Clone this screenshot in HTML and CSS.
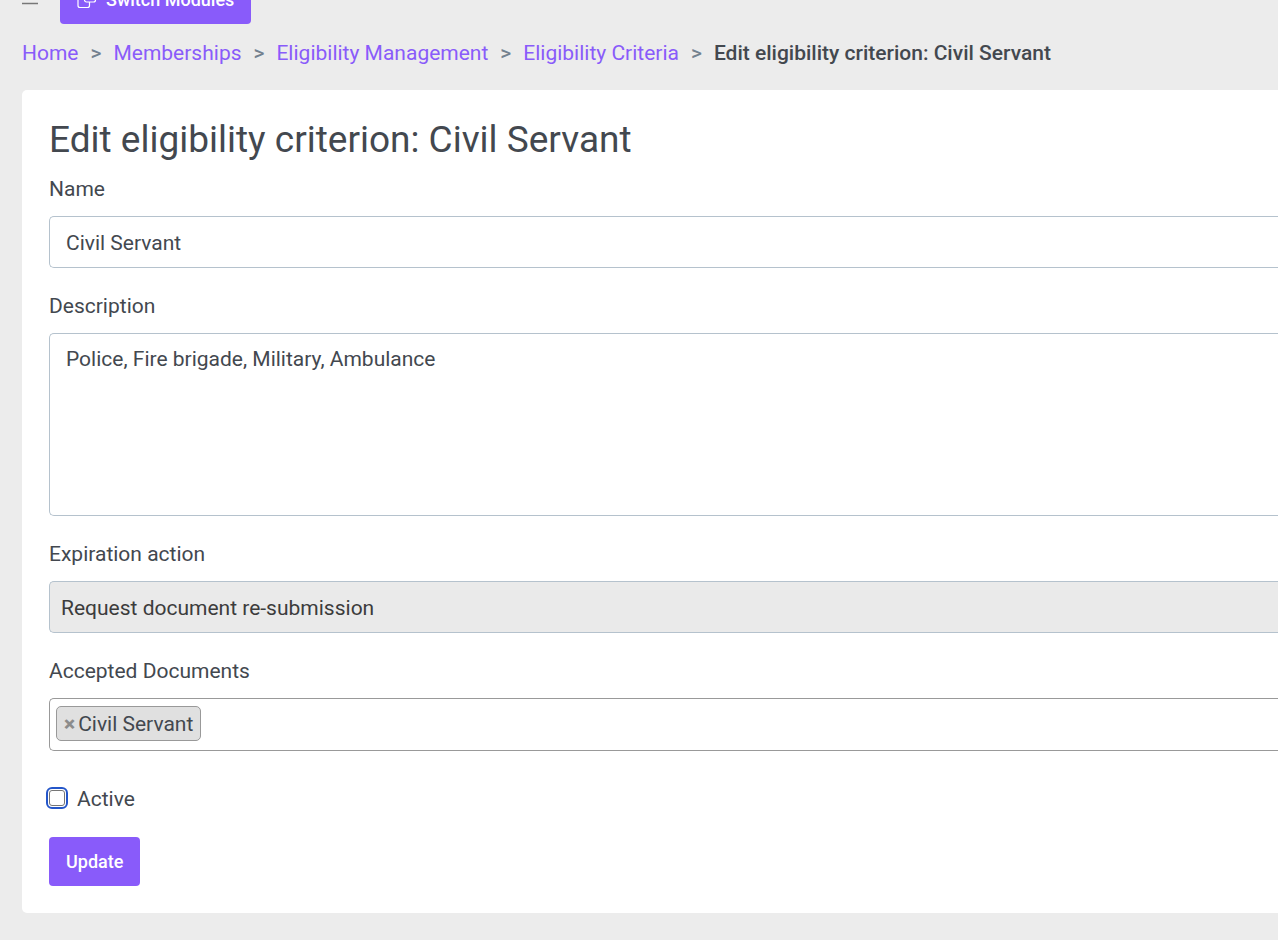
FILE: index.html
```html
<!DOCTYPE html>
<html lang="en">
<head>
    <meta charset="UTF-8">
    <meta name="viewport" content="width=device-width, initial-scale=1.0">
    <title>Edit eligibility criterion: Civil Servant</title>
    <link rel="stylesheet" href="styles.css">
</head>
<body>
    <header class="topbar">
        <button type="button" class="menu-toggle" aria-label="Toggle menu">
            <svg width="16" height="16" viewBox="0 0 16 16" fill="none" stroke="currentColor" stroke-width="1.5">
                <path d="M0 1.5h16M0 8h16M0 14.5h16"/>
            </svg>
        </button>
        <button type="button" class="btn btn-modules">
            <svg width="20" height="20" viewBox="0 0 20 20" fill="none" stroke="currentColor" stroke-width="1.2">
                <rect x="7.5" y="1" width="11" height="11" rx="2"/>
                <path d="M7.5 6H3a2 2 0 0 0-2 2v7.5a2 2 0 0 0 2 2h7.5a2 2 0 0 0 2-2V12"/>
            </svg>
            Switch Modules
        </button>
    </header>

    <nav aria-label="Breadcrumb">
        <ol class="breadcrumb">
            <li><a href="#">Home</a></li>
            <li><a href="#">Memberships</a></li>
            <li><a href="#">Eligibility Management</a></li>
            <li><a href="#">Eligibility Criteria</a></li>
            <li class="active" aria-current="page">Edit eligibility criterion: Civil Servant</li>
        </ol>
    </nav>

    <main class="card">
        <h1>Edit eligibility criterion: Civil Servant</h1>
        <form>
            <div class="form-group">
                <label for="name">Name</label>
                <input type="text" id="name" class="form-control" value="Civil Servant">
            </div>
            <div class="form-group">
                <label for="description">Description</label>
                <textarea id="description" class="form-control">Police, Fire brigade, Military, Ambulance</textarea>
            </div>
            <div class="form-group">
                <label for="expiration">Expiration action</label>
                <select id="expiration" class="form-control">
                    <option>Request document re-submission</option>
                </select>
            </div>
            <div class="form-group">
                <label for="documents">Accepted Documents</label>
                <div class="tag-select">
                    <span class="tag"><button type="button" class="tag-remove" aria-label="Remove Civil Servant">×</button>Civil Servant</span>
                    <input type="text" id="documents" class="tag-search">
                </div>
            </div>
            <div class="form-check">
                <input type="checkbox" id="active">
                <label for="active">Active</label>
            </div>
            <button type="submit" class="btn">Update</button>
        </form>
    </main>
</body>
</html>
```
FILE: styles.css
```css
* {
    box-sizing: border-box;
}

body {
    margin: 0;
    padding-left: 22px;
    background-color: #ececec;
    color: #43484f;
    font-family: Roboto, sans-serif;
    font-size: 21px;
    line-height: 32px;
}

button,
input,
select,
textarea {
    font: inherit;
    color: inherit;
}

/* Top bar */
.topbar {
    display: flex;
    align-items: flex-end;
    gap: 22px;
    height: 24px;
    overflow: hidden;
}

.menu-toggle {
    height: 48px;
    padding: 0 0 19px;
    border: none;
    background: none;
    color: #777;
    display: flex;
    align-items: flex-end;
}

.btn {
    height: 49px;
    padding: 0 17px;
    border: none;
    border-radius: 4px;
    background-color: #895bfa;
    color: #fff;
    font-size: 18px;
    font-weight: 500;
    line-height: 28px;
    cursor: pointer;
}

.btn-modules {
    display: flex;
    align-items: center;
    gap: 9px;
}

/* Breadcrumb */
.breadcrumb {
    display: flex;
    margin: 0;
    padding: 13px 0 21px;
    list-style: none;
}

.breadcrumb li + li::before {
    content: ">";
    padding: 0 12px;
    color: #73818f;
    font-weight: 500;
}

.breadcrumb a {
    color: #895bfa;
    text-decoration: none;
}

.breadcrumb .active {
    font-weight: 500;
}

/* Form card */
.card {
    padding: 27px 0 27px 27px;
    border-radius: 5px 0 0 5px;
    background-color: #fff;
}

.card h1 {
    margin: 0 0 11px;
    font-size: 37px;
    font-weight: 400;
    line-height: 45px;
}

.form-group {
    margin-bottom: 22px;
}

.form-group label {
    display: block;
    margin-bottom: 11px;
}

.form-control {
    display: block;
    width: 100%;
    height: 52px;
    padding: 9px 16px 8px;
    border: 1px solid #b5c2cd;
    border-right: none;
    border-radius: 5px 0 0 5px;
    background-color: #fff;
}

textarea.form-control {
    height: 183px;
    resize: none;
}

select.form-control {
    padding: 9px 11px 8px;
    appearance: none;
    background-color: #eaeaea;
    color: #3c3c3c;
}

.tag-select {
    display: flex;
    align-items: flex-start;
    height: 53px;
    padding: 7px 6px;
    border: 1px solid #999;
    border-right: none;
    border-radius: 5px 0 0 5px;
}

.tag {
    display: flex;
    align-items: center;
    height: 35px;
    padding: 0 7px;
    border: 1px solid #999;
    border-radius: 5px;
    background-color: #e0e0e0;
}

.tag-remove {
    padding: 0 3px 0 0;
    border: none;
    background: none;
    color: #8c8c8c;
    font-weight: 900;
    cursor: pointer;
}

.tag-search {
    flex: 1;
    border: none;
    outline: none;
    background: none;
}

.form-check {
    display: flex;
    align-items: center;
    gap: 12px;
    margin: 32px 0 22px;
}

.form-check input {
    appearance: none;
    width: 16px;
    height: 16px;
    margin: 0 0 2px;
    border: 1px solid #767676;
    border-radius: 3px;
    background-color: #fff;
    outline: 2px solid #2456c9;
    outline-offset: 1px;
}
```
